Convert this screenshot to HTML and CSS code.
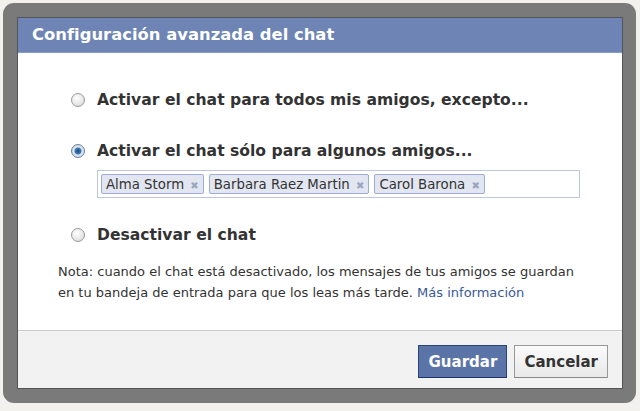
FILE: index.html
```html
<!DOCTYPE html>
<html lang="es">
<head>
    <meta charset="UTF-8">
    <title>Configuración avanzada del chat</title>
    <link rel="stylesheet" href="styles.css">
</head>
<body>
    <div class="backdrop">
        <div class="frame">
            <div class="dialog">
                <div class="dialog-title">Configuración avanzada del chat</div>
                <div class="dialog-body">
                    <div class="options">
                        <label class="option">
                            <span class="radio"></span>
                            <span class="option-label">Activar el chat para todos mis amigos, excepto...</span>
                        </label>
                        <label class="option option-second">
                            <span class="radio checked"></span>
                            <span class="option-label">Activar el chat sólo para algunos amigos...</span>
                        </label>
                        <div class="tokens">
                            <span class="token">Alma Storm <span class="remove">&#x2716;</span></span>
                            <span class="token">Barbara Raez Martin <span class="remove">&#x2716;</span></span>
                            <span class="token">Carol Barona <span class="remove">&#x2716;</span></span>
                        </div>
                        <label class="option option-third">
                            <span class="radio"></span>
                            <span class="option-label">Desactivar el chat</span>
                        </label>
                    </div>
                    <p class="note">Nota: cuando el chat está desactivado, los mensajes de tus amigos se guardan en tu bandeja de entrada para que los leas más tarde. <a href="#">Más información</a></p>
                </div>
                <div class="dialog-footer">
                    <button class="btn btn-primary">Guardar</button>
                    <button class="btn">Cancelar</button>
                </div>
            </div>
        </div>
    </div>
</body>
</html>
```

FILE: styles.css
```css
body {
    margin: 0;
    background: #f3f1ee;
    font-family: 'DejaVu Sans', sans-serif;
    color: #333;
}
.backdrop {
    padding: 3px 4px 7px 3px;
}
.frame {
    background: #7a7a7a;
    border-radius: 11px;
    padding: 14px 13px 14px 14px;
}
.dialog {
    border: 1px solid #555;
    background: #fff;
}
.dialog-title {
    background: #6d84b4;
    border-bottom: 1px solid #8a9cc4;
    color: #fff;
    font-size: 16.4px;
    font-weight: bold;
    height: 34px;
    line-height: 34px;
    padding-left: 14px;
}
.dialog-body {
    padding: 37px 40px 27px 40px;
}
.options {
    margin-left: 13px;
}
.option {
    display: flex;
    align-items: center;
    height: 20px;
    font-size: 15.6px;
    font-weight: bold;
}
.option-second {
    margin-top: 31px;
}
.option-third {
    margin-top: 27px;
}
.radio {
    width: 14px;
    height: 14px;
    border-radius: 50%;
    border: 1px solid #9a9a9a;
    background: radial-gradient(circle at 40% 35%, #fff 0%, #e6e6e6 60%, #cfcfcf 100%);
    box-sizing: border-box;
    margin-right: 12px;
    flex: none;
}
.radio.checked {
    border-color: #6a7f9c;
    background: radial-gradient(circle, #1a4e86 0, #3d7ab8 3px, #dfe6ee 4px, #c8d2de 100%);
}
.tokens {
    margin: 9px 0 0 26px;
    width: 483px;
    height: 28px;
    box-sizing: border-box;
    border: 1px solid #bdc7d8;
    padding: 3px;
    display: flex;
    gap: 5px;
}
.token {
    background: #e2e6f0;
    border: 1px solid #9dacd0;
    border-radius: 2px;
    height: 20px;
    line-height: 19px;
    box-sizing: border-box;
    padding: 0 4px;
    font-size: 13.3px;
    color: #333;
}
.remove {
    color: #9aa6bf;
    font-size: 10px;
    margin-left: 2px;
}
.note {
    margin: 16px 0 0 0;
    font-size: 13px;
    line-height: 21px;
    color: #333;
}
.note a {
    color: #3b5998;
    text-decoration: none;
}
.dialog-footer {
    background: #f2f2f2;
    border-top: 1px solid #ccc;
    padding: 14px 14px 10px 0;
    display: flex;
    justify-content: flex-end;
    gap: 7px;
}
.btn {
    height: 33px;
    padding: 0 9px;
    font-family: 'DejaVu Sans', sans-serif;
    font-size: 15px;
    font-weight: bold;
    border: 1px solid #999;
    border-bottom-color: #888;
    background: linear-gradient(#fafafa, #e9e9e9);
    color: #333;
    cursor: pointer;
}
.btn-primary {
    background: #5b74a8;
    border-color: #29447e #29447e #1a356e;
    color: #fff;
    width: 89px;
}
```
